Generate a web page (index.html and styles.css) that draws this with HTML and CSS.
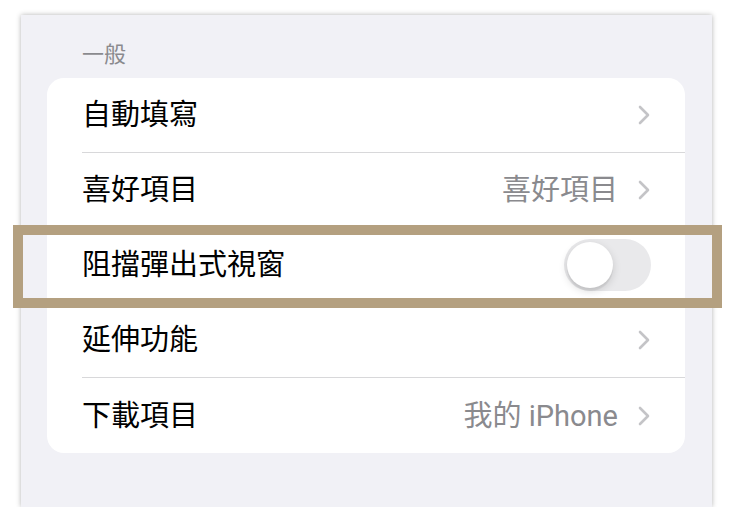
FILE: index.html
```html
<!DOCTYPE html>
<html lang="zh-Hant">
<head>
  <meta charset="UTF-8" />
  <meta name="viewport" content="width=device-width, initial-scale=1.0" />
  <title>Safari 設定</title>
  <link rel="stylesheet" href="styles.css">
</head>
<body>
  <div class="panel">
    <div class="section-title">一般</div>

    <div class="card">
      <div class="row">
        <div class="row-body">
          <span class="label">自動填寫</span>
          <svg class="chevron" viewBox="0 0 12 20"><path d="M2 2 L10 10 L2 18" /></svg>
        </div>
      </div>
      <div class="row">
        <div class="row-body">
          <span class="label">喜好項目</span>
          <span class="value">喜好項目</span>
          <svg class="chevron" viewBox="0 0 12 20"><path d="M2 2 L10 10 L2 18" /></svg>
        </div>
      </div>
      <div class="row highlighted">
        <div class="row-body">
          <span class="label">阻擋彈出式視窗</span>
          <div class="toggle"><div class="knob"></div></div>
        </div>
        <!-- tan frame drawn over the row -->
        <div class="frame"></div>
      </div>
      <div class="row">
        <div class="row-body">
          <span class="label">延伸功能</span>
          <svg class="chevron" viewBox="0 0 12 20"><path d="M2 2 L10 10 L2 18" /></svg>
        </div>
      </div>
      <div class="row">
        <div class="row-body">
          <span class="label">下載項目</span>
          <span class="value">我的 iPhone</span>
          <svg class="chevron" viewBox="0 0 12 20"><path d="M2 2 L10 10 L2 18" /></svg>
        </div>
      </div>
    </div>
  </div>
</body>
</html>
```

FILE: styles.css
```css
body {
  margin: 0;
  background: #ffffff;
  font-family: "Roboto", "Noto Sans CJK TC", sans-serif;
}

.panel {
  margin: 15px 0 0 21px;
  width: 691px;
  height: 492px;
  background: #f1f1f6;
  box-shadow: 0 0 5px rgba(0, 0, 0, 0.3);
  padding: 0 27px 0 26px;
  box-sizing: border-box;
}

.section-title {
  height: 63px;
  box-sizing: border-box;
  display: flex;
  align-items: flex-end;
  padding: 0 0 10px 35px;
  font-size: 22px;
  line-height: 26px;
  color: #8a8a8e;
}

.card {
  background: #ffffff;
  border-radius: 17px;
}

.row {
  position: relative;
  height: 75px;
  padding-left: 35px;
  display: flex;
}

.row-body {
  flex: 1;
  display: flex;
  align-items: center;
  padding-right: 35px;
  border-bottom: 1px solid #d8d8da;
}

.row:last-child .row-body {
  border-bottom: none;
}

.label {
  flex: 1;
  font-size: 29px;
  line-height: 36px;
  color: #000000;
}

.value {
  font-size: 29px;
  line-height: 36px;
  color: #8a8a8e;
  margin-right: 20px;
}

.chevron {
  width: 12px;
  height: 20px;
  fill: none;
  stroke: #c4c4c7;
  stroke-width: 2.6;
  stroke-linecap: round;
  stroke-linejoin: round;
}

.toggle {
  position: relative;
  width: 87px;
  height: 52px;
  border-radius: 26px;
  background: #e9e9eb;
  margin-right: -1px;
}

.knob {
  position: absolute;
  top: 3px;
  left: 3px;
  width: 46px;
  height: 46px;
  border-radius: 50%;
  background: #ffffff;
  box-shadow: 0 3px 8px rgba(0, 0, 0, 0.15), 0 3px 1px rgba(0, 0, 0, 0.06);
}

.frame {
  position: absolute;
  top: -3px;
  left: -34px;
  width: 709px;
  height: 83px;
  box-sizing: border-box;
  border: 10px solid #b4a080;
  pointer-events: none;
}
```
